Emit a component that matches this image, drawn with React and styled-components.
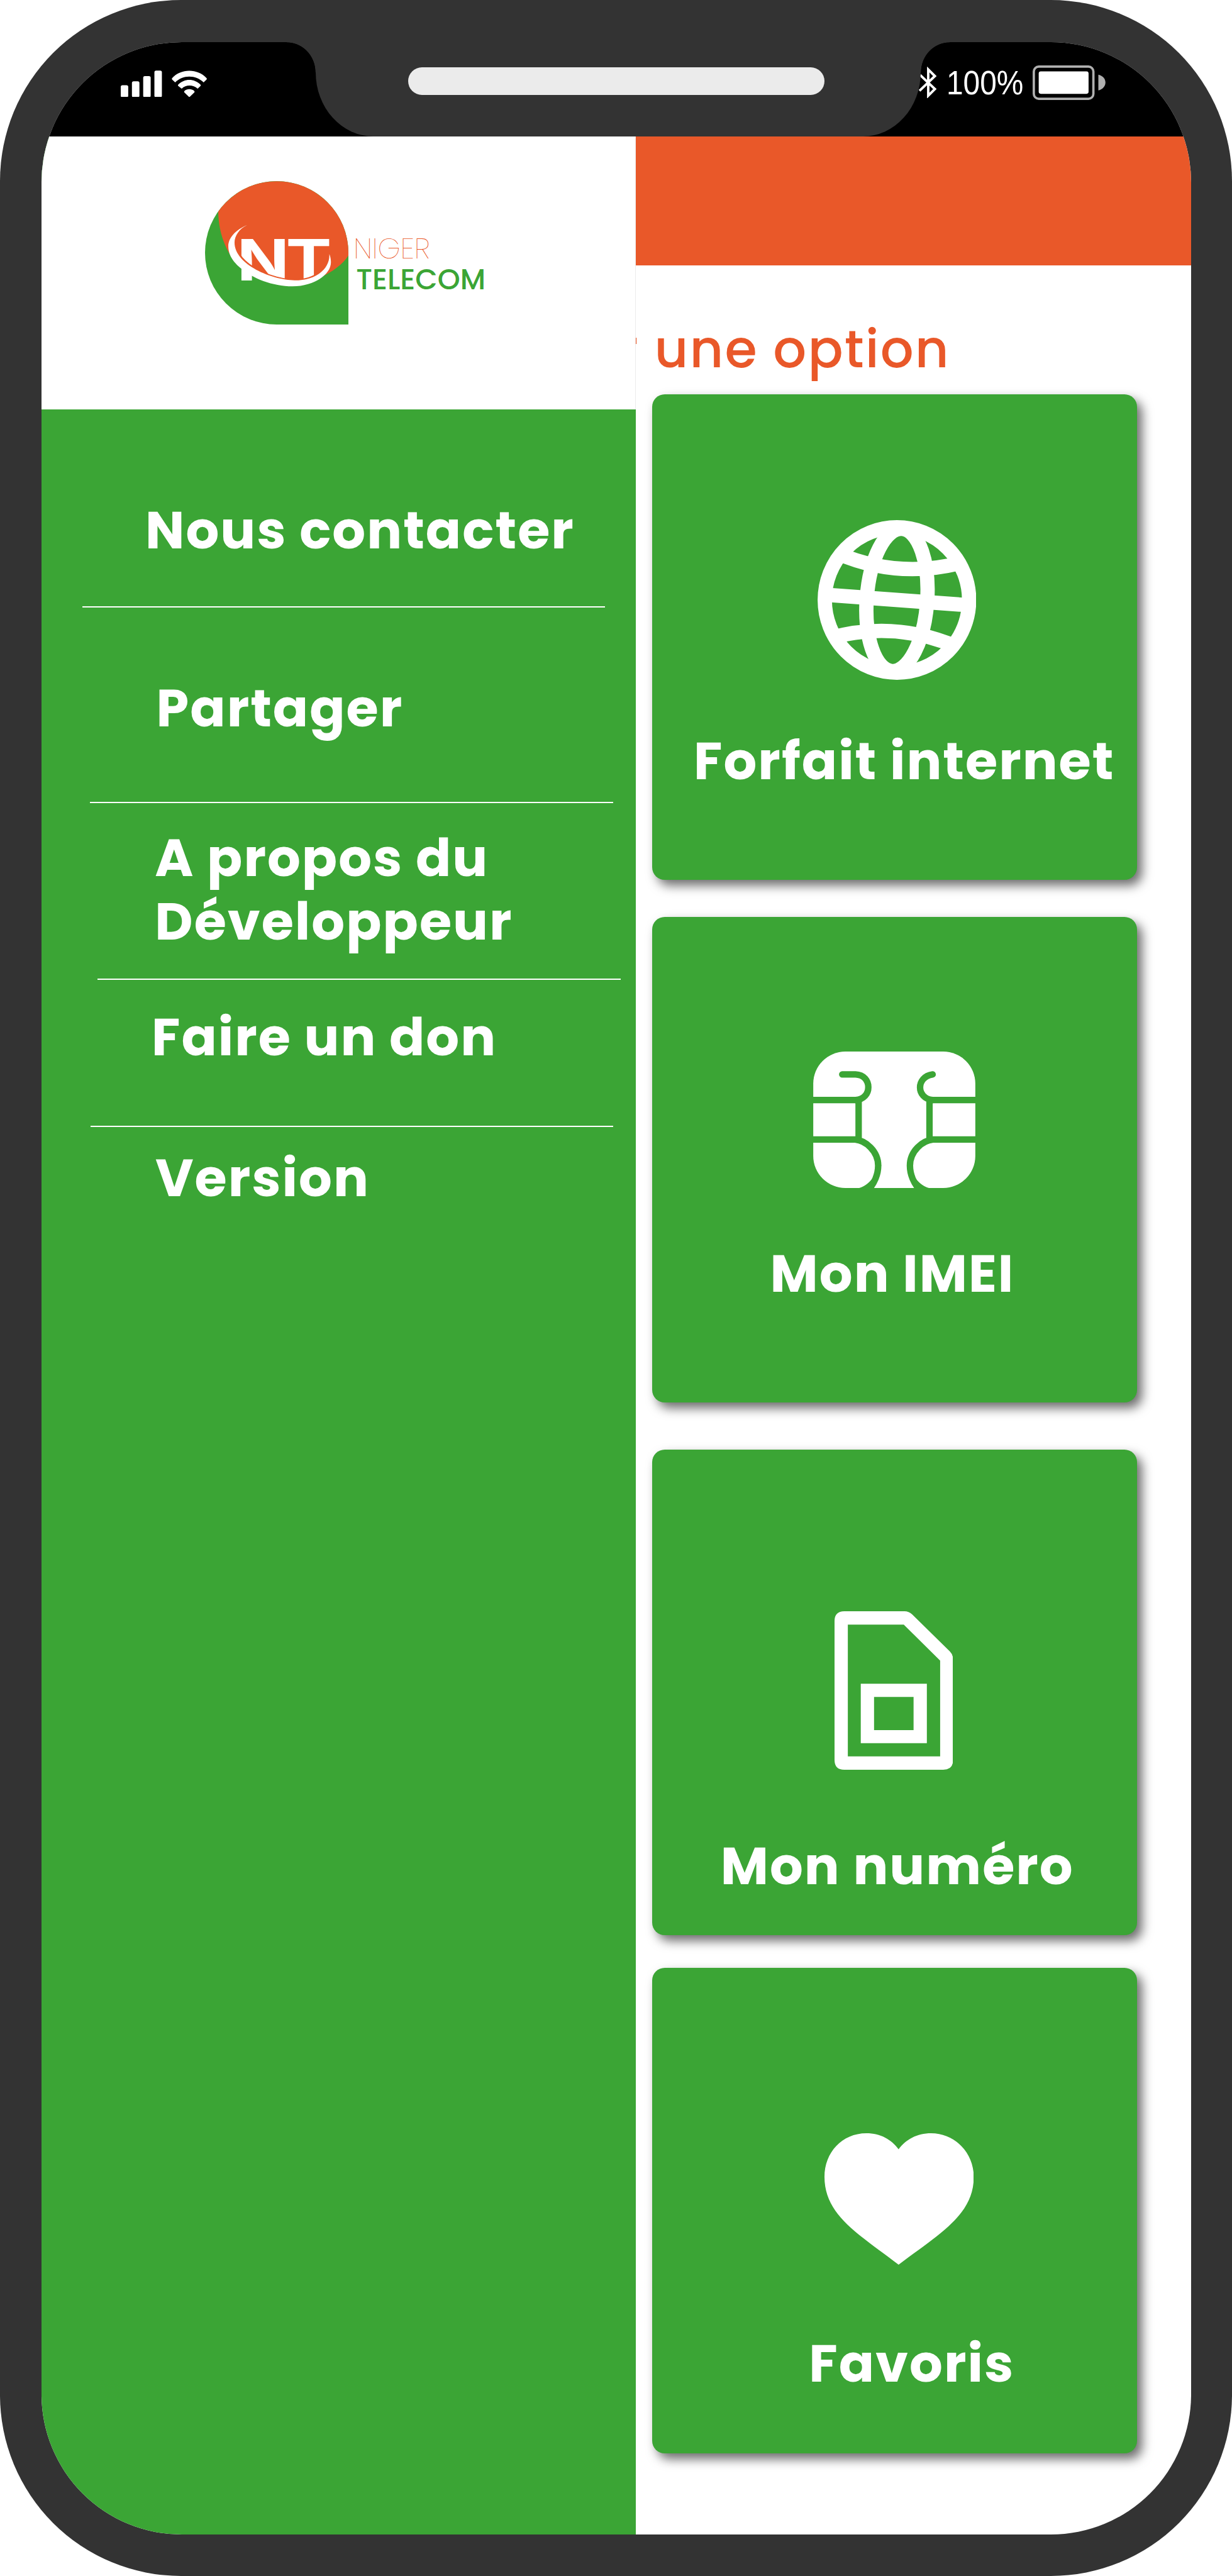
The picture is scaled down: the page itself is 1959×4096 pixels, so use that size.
import React from "react";
import styled, { createGlobalStyle } from "styled-components";

const GREEN = "#3ba535";
const ORANGE = "#e95829";
const FRAME = "#333333";

const GlobalStyle = createGlobalStyle`
  html, body { margin: 0; padding: 0; background: #fff; }
  * { box-sizing: border-box; }
  svg { display: block; flex: none; }
`;

const Phone = styled.div`
  width: 1959px;
  height: 4096px;
  padding: 67px 65.5px 66.5px;
  background: ${FRAME};
  border-radius: 288px;
  font-family: Poppins, Inter, "Open Sans", sans-serif;
`;

const Screen = styled.div`
  position: relative;
  display: flex;
  flex-direction: column;
  width: 100%;
  height: 100%;
  overflow: hidden;
  background: #fff;
  border-radius: 223px;
`;

const StatusBar = styled.div`
  flex: none;
  display: flex;
  justify-content: space-between;
  align-items: flex-start;
  height: 149.5px;
  padding: 37px 135.3px 0 126.8px;
  background: #000;
`;

const SignalGroup = styled.div`
  padding-top: 7.7px;
`;

const PowerGroup = styled.div`
  display: flex;
  align-items: flex-start;
`;

const BluetoothSlot = styled.div`
  padding: 1.6px 14.7px 0 0;
`;

const BatteryText = styled.span`
  width: 137.4px;
  margin-top: -2px;
  color: #fff;
  font: 400 53px/60px "Liberation Sans", Arial, sans-serif;
  white-space: nowrap;
  transform: scaleX(0.903);
  transform-origin: left;
`;

/* Hardware notch, laid over the status bar */
const Notch = styled.div`
  position: absolute;
  top: 0;
  left: 436px;
  width: 962.6px;
  height: 149.5px;
  background: ${FRAME};
  border-radius: 0 0 92px 92px / 0 0 102px 102px;
  display: flex;
  justify-content: center;
  padding-top: 39.5px;

  &::before,
  &::after {
    content: "";
    position: absolute;
    top: 0;
    width: 46px;
    height: 48px;
  }
  &::before {
    right: 100%;
    background: radial-gradient(46px 48px at 0 100%, transparent 98.5%, ${FRAME} 100%);
  }
  &::after {
    left: 100%;
    background: radial-gradient(46px 48px at 100% 100%, transparent 98.5%, ${FRAME} 100%);
  }
`;

const Speaker = styled.div`
  width: 662.6px;
  height: 44.2px;
  margin-right: 6px;
  border-radius: 22.1px;
  background: #ebebeb;
`;

const Body = styled.div`
  flex: 1;
  display: flex;
  min-height: 0;
`;

const Drawer = styled.aside`
  flex: none;
  display: flex;
  flex-direction: column;
  width: 945.3px;
  background: ${GREEN};
`;

const DrawerHeader = styled.header`
  display: flex;
  align-items: flex-start;
  gap: 8px;
  height: 434.5px;
  padding: 71px 0 0 260.7px;
  background: #fff;
  border-right: 1px solid #ececec;
`;

const BrandName = styled.div`
  display: flex;
  flex-direction: column;
  padding-top: 83.3px;
`;

const BrandLine = styled.span`
  margin-left: ${(p) => p.$left}px;
  color: ${(p) => p.$color};
  font-size: 45.8px;
  line-height: 49px;
  font-weight: ${(p) => p.$weight};
`;

const Menu = styled.nav`
  display: flex;
  flex-direction: column;
`;

const MenuItem = styled.div`
  height: ${(p) => p.$height}px;
  padding: ${(p) => p.$top}px 0 0 ${(p) => p.$left}px;
`;

const Label = styled.div`
  color: #fff;
  font-size: 83px;
  font-weight: 700;
  line-height: 101px;
  letter-spacing: 2px;
  white-space: nowrap;
`;

const Divider = styled.hr`
  flex: none;
  width: 831.5px;
  height: 2px;
  margin: 0 0 0 ${(p) => p.$left}px;
  border: 0;
  background: #fff;
`;

const Content = styled.main`
  flex: 1;
  min-width: 0;
  overflow: hidden;
`;

const AppBar = styled.div`
  height: 205.5px;
  background: ${ORANGE};
`;

const Heading = styled.h1`
  margin: 82.3px 0 19.7px -28px;
  color: ${ORANGE};
  font-size: 83px;
  font-weight: 500;
  line-height: 103px;
  letter-spacing: 2.1px;
  white-space: nowrap;
`;

const Card = styled.section`
  display: flex;
  flex-direction: column;
  align-items: flex-start;
  width: 771.5px;
  height: 772px;
  margin: 0 0 ${(p) => p.$gap}px 26px;
  padding-top: ${(p) => p.$top}px;
  background: ${GREEN};
  border-radius: 20px;
  box-shadow: 8px 9px 17px rgba(0, 0, 0, 0.58);
`;

const CardIcon = styled.div`
  margin-left: ${(p) => p.$left}px;
`;

const CardLabel = styled.div`
  margin: ${(p) => p.$top}px 0 0 ${(p) => p.$left}px;
`;

const SignalIcon = () => (
  <svg width="137.3" height="42.8" viewBox="346 201 247 77" fill="#fff">
    <rect x="346" y="243.3" width="21.4" height="34.7" rx="5" />
    <rect x="378" y="232" width="21.4" height="46" rx="5" />
    <rect x="410.2" y="217" width="21.4" height="61" rx="5" />
    <rect x="442.3" y="201.3" width="21.4" height="76.7" rx="5" />
    <path d="M493 227Q491.5 225 493 223C518 195 566 195 591.5 223Q593 225 591.5 227L583 235C560 213 524 213 501.7 235Z" />
    <path d="M510 245Q509 243 510.5 241.5C528 223.5 556 223.5 574 241.5Q575.5 243 574.5 245L566 253C553 241.5 532 241.5 520.4 253Z" />
    <path d="M528 264Q526.5 261.5 528.5 259.5C535 253 549 253 556 259.5Q558 261.5 556.5 264L542.2 277.7Z" />
  </svg>
);

const BluetoothIcon = () => (
  <svg width="28.9" height="50.6" viewBox="2628 190 52 91" fill="none" stroke="#fff" strokeWidth="7" strokeMiterlimit="10">
    <path d="M2632 214L2674 254L2655 273V198L2674 217L2630 259" />
  </svg>
);

const BatteryIcon = () => (
  <svg width="116.2" height="55" viewBox="2954 187 209 99">
    <rect x="2957.3" y="190.5" width="170.5" height="92" rx="14" fill="none" stroke="#b0b0b0" strokeWidth="6.7" />
    <rect x="2971.3" y="204" width="142.7" height="64.3" rx="6" fill="#fff" />
    <path d="M3142 213.7C3169 220 3169 252 3142 258.7Z" fill="#b0b0b0" />
  </svg>
);

const BrandMark = () => (
  <svg width="228" height="228" viewBox="64 112 714 1230" preserveAspectRatio="none">
    <ellipse cx="421" cy="727" rx="357" ry="615" fill={GREEN} />
    <rect x="421" y="727" width="357" height="615" fill={GREEN} />
    <path d="M130 372C130 600 200 1000 480 990C610 990 730 880 778 750V727A357 615 0 0 0 130 372Z" fill={ORANGE} />
    <text transform="translate(223 965) scale(0.7 1)" fill="#fff" fontFamily="Inter, sans-serif" fontWeight="700" fontSize="488">
      N<tspan dx="-24">T</tspan>
    </text>
    <path d="M274 488C235 520 211 580 211 640C211 830 400 963 510 963C620 963 687 860 683 738" fill="none" stroke={ORANGE} strokeWidth="20" />
    <path
      d="M274 488C215 530 180 600 180 670C180 760 215 820 243 860C300 945 400 1014 500 1014C600 1014 691 920 691 808C691 780 688 758 683 738C687 860 620 963 510 963C400 963 211 830 211 640C211 580 235 520 274 488Z"
      fill="#fff"
    />
  </svg>
);

const GlobeIcon = () => (
  <svg width="252.5" height="254" viewBox="-227 -228.5 454 457" fill="none" stroke="#fff" strokeWidth="41">
    <ellipse rx="206.5" ry="208" />
    <g transform="rotate(4.15)">
      <ellipse rx="86.5" ry="204" />
      <path d="M-206 0H206M-180 -121Q0 -59 180 -121M-180 121Q0 59 180 121" />
    </g>
  </svg>
);

const ChipIcon = () => (
  <svg width="258" height="217" viewBox="0 0 464.3 391">
    <rect width="464.3" height="391" rx="92" fill="#fff" />
    <g fill="none" stroke={GREEN} strokeWidth="18.5">
      <path strokeLinecap="round" d="M83 65.5H121C170 67 170 137 121 139" />
      <path strokeLinecap="round" d="M342 65.5C294 72 294 134 342 139" />
      <path d="M-5 139H122M130 139V252M-5 252H120C150 255 186 285 186 327C186 352 175 378 158 396" />
      <path d="M470 139H341M333 139V252M470 252H343C313 255 277 285 277 327C277 352 288 378 305 396" />
    </g>
    <path fill={GREEN} d="M186 325C183 358 150 391 127 391.5H166C185 365 192 345 195 325ZM277 325C280 358 313 391 336 391.5H297C278 365 271 345 268 325Z" />
  </svg>
);

const SimIcon = () => (
  <svg width="188.5" height="252" viewBox="0 0 339 453" fill="#fff" fillRule="evenodd">
    <path d="M28 0H200Q212 0 222 9L330 115Q339 124 339 138V425Q339 453 311 453H28Q0 453 0 425V28Q0 0 28 0ZM38 38V415H302V141L198 38Z" />
    <path d="M75 207H264V377H75ZM113 245V340H226V245Z" />
  </svg>
);

const HeartIcon = () => (
  <svg width="237.4" height="209" viewBox="0 0 427 376" fill="#fff">
    <path d="M212 46C192 18 160 0 120 0C50 0 0 55 0 125C0 235 100 290 212 376C325 290 427 235 427 125C427 55 372 0 305 0C265 0 232 18 212 46Z" />
  </svg>
);

const menu = [
  { lines: ["Nous contacter"], height: 313, top: 142, left: 165.5, rule: 65 },
  { lines: ["Partager"], height: 309, top: 109.5, left: 183, rule: 77.5 },
  { lines: ["A propos du", "Développeur"], height: 279, top: 37, left: 180.8, rule: 89.8 },
  { lines: ["Faire un don"], height: 232, top: 40.8, left: 175.5, rule: 78.3 },
  { lines: ["Version"], height: 232, top: 30.8, left: 181.5 },
];

const cards = [
  { label: "Forfait internet", Icon: GlobeIcon, gap: 59.2, top: 199.8, iconLeft: 263, labelTop: 79.5, labelLeft: 66.3 },
  { label: "Mon IMEI", Icon: ChipIcon, gap: 74.5, top: 213.4, iconLeft: 256, labelTop: 86, labelLeft: 187.8 },
  { label: "Mon numéro", Icon: SimIcon, gap: 52, top: 257.5, iconLeft: 290, labelTop: 102.8, labelLeft: 109 },
  { label: "Favoris", Icon: HeartIcon, gap: 0, top: 263, iconLeft: 274, labelTop: 107.3, labelLeft: 249.5 },
];

export default function App() {
  return (
    <>
      <GlobalStyle />
      <Phone>
        <Screen>
          <StatusBar>
            <SignalGroup>
              <SignalIcon />
            </SignalGroup>
            <PowerGroup>
              <BluetoothSlot>
                <BluetoothIcon />
              </BluetoothSlot>
              <BatteryText>100%</BatteryText>
              <BatteryIcon />
            </PowerGroup>
          </StatusBar>
          <Notch>
            <Speaker />
          </Notch>
          <Body>
            <Drawer>
              <DrawerHeader>
                <BrandMark />
                <BrandName>
                  <BrandLine $color={ORANGE} $weight={100} $left={0}>NIGER</BrandLine>
                  <BrandLine $color={GREEN} $weight={500} $left={4}>TELECOM</BrandLine>
                </BrandName>
              </DrawerHeader>
              <Menu>
                {menu.map((item) => (
                  <React.Fragment key={item.lines[0]}>
                    <MenuItem $height={item.height} $top={item.top} $left={item.left}>
                      {item.lines.map((text) => (
                        <Label key={text}>{text}</Label>
                      ))}
                    </MenuItem>
                    {item.rule && <Divider $left={item.rule} />}
                  </React.Fragment>
                ))}
              </Menu>
            </Drawer>
            <Content>
              <AppBar />
              <Heading>r une option</Heading>
              {cards.map(({ label, Icon, gap, top, iconLeft, labelTop, labelLeft }) => (
                <Card key={label} $gap={gap} $top={top}>
                  <CardIcon $left={iconLeft}>
                    <Icon />
                  </CardIcon>
                  <CardLabel $top={labelTop} $left={labelLeft}>
                    <Label>{label}</Label>
                  </CardLabel>
                </Card>
              ))}
            </Content>
          </Body>
        </Screen>
      </Phone>
    </>
  );
}
